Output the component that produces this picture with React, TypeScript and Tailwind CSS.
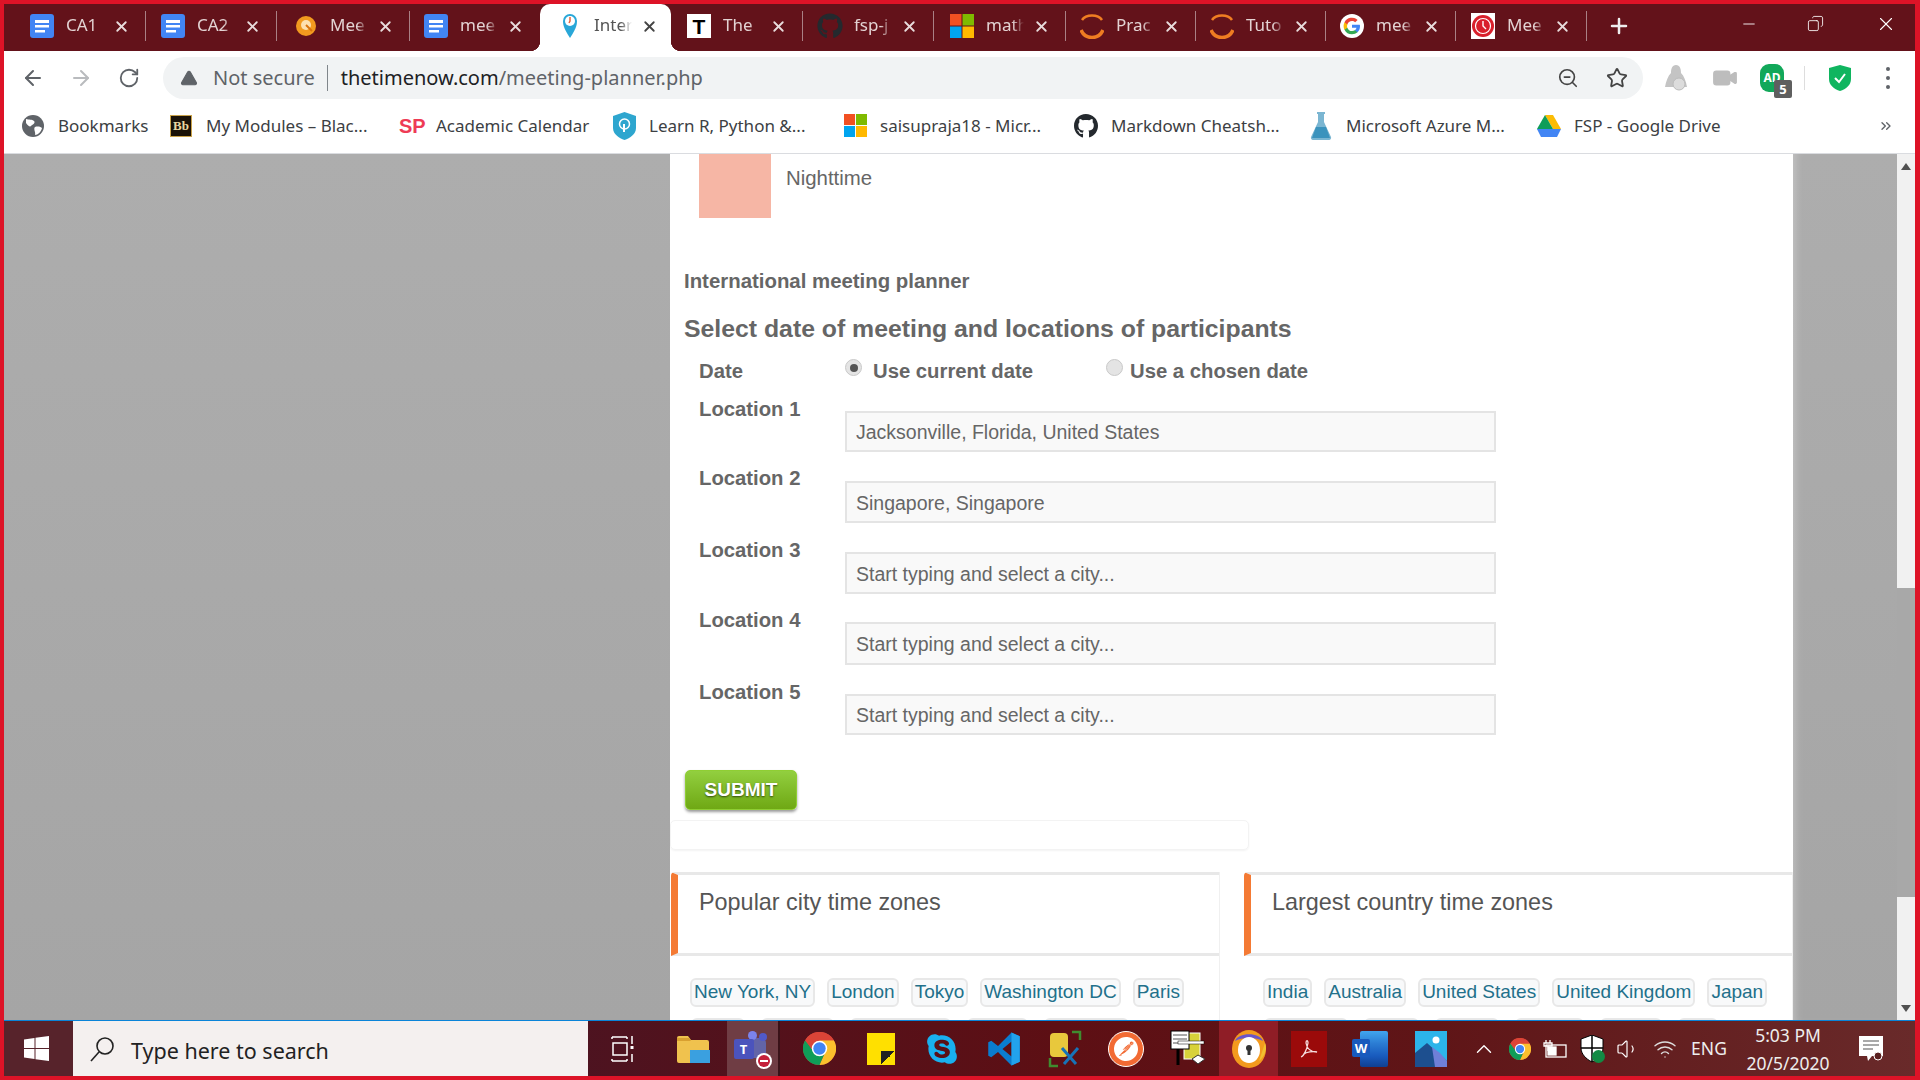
import React from "react";
import { ArrowLeft, ArrowRight, RotateCw, ZoomOut, Star, Video, Volume1, Wifi, ChevronUp, X, Plus, Minus, Copy, TriangleAlert, ChevronsRight } from "lucide-react";
import { FaGithub, FaSkype } from "react-icons/fa";
import { SiPostman } from "react-icons/si";

const Doc = () => (
  <svg width="24" height="24" viewBox="0 0 24 24"><rect x="0" width="24" height="24" rx="3" fill="#4285f4" /><rect x="5" y="6" width="14" height="3" fill="#fff" /><rect x="5" y="11" width="14" height="2.5" fill="#fff" /><rect x="5" y="16" width="10" height="2.5" fill="#fff" /></svg>
);
const Ball = () => (
  <svg width="24" height="24" viewBox="0 0 24 24"><circle cx="12" cy="12" r="10" fill="#f29a1f" /><circle cx="12" cy="11" r="5" fill="#fde0b0" /><path d="M12 11l6 6" stroke="#d9730d" strokeWidth="2" /></svg>
);
const Pin = () => (
  <svg width="24" height="26" viewBox="0 0 24 26"><path d="M12 25C7 17 5 13 5 8a7 7 0 0 1 14 0c0 5-2 9-7 17z" fill="#29a7d8" /><circle cx="12" cy="8" r="5" fill="#fff" /><path d="M12 4v4l-1 2" stroke="#e8633a" strokeWidth="1.5" fill="none" /></svg>
);
const TIcon = () => (
  <div className="w-[24px] h-[24px] bg-white flex items-center justify-center font-bold text-black text-[21px] leading-none font-['Liberation_Sans',sans-serif]">T</div>
);
const Ms = ({ s = 24 }: { s?: number }) => (
  <svg width={s} height={s} viewBox="0 0 24 24"><rect width="11.5" height="11.5" fill="#f25022" /><rect x="12.5" width="11.5" height="11.5" fill="#7fba00" /><rect y="12.5" width="11.5" height="11.5" fill="#00a4ef" /><rect x="12.5" y="12.5" width="11.5" height="11.5" fill="#ffb900" /></svg>
);
const Arcs = () => (
  <svg width="24" height="26" viewBox="0 0 24 26" fill="none"><path d="M2 7C6 1 18 1 22 7" stroke="#ef7d22" strokeWidth="2.5" /><path d="M1 17c4 10 18 10 22 0" stroke="#ef7d22" strokeWidth="3.5" /></svg>
);
const G = () => (
  <svg width="24" height="24" viewBox="0 0 24 24"><circle cx="12" cy="12" r="12" fill="#fff" /><path d="M20 12.3c0-.6-.1-1.1-.2-1.6H12v3.1h4.5a3.9 3.9 0 0 1-1.7 2.5v2h2.7c1.6-1.4 2.5-3.6 2.5-6z" fill="#4285f4" /><path d="M12 20.3c2.2 0 4.1-.7 5.5-2l-2.7-2c-.8.5-1.7.8-2.8.8-2.2 0-4-1.4-4.7-3.4H4.5v2.1A8.3 8.3 0 0 0 12 20.3z" fill="#34a853" /><path d="M7.3 13.7a5 5 0 0 1 0-3.3V8.3H4.5a8.3 8.3 0 0 0 0 7.5z" fill="#fbbc05" /><path d="M12 7c1.2 0 2.3.4 3.2 1.3l2.4-2.4A8.3 8.3 0 0 0 4.5 8.3l2.8 2.1C8 8.4 9.8 7 12 7z" fill="#ea4335" /></svg>
);
const RedClock = () => (
  <svg width="24" height="26" viewBox="0 0 24 26"><rect width="24" height="26" fill="#fff" /><circle cx="12" cy="13" r="11" fill="#d9202c" /><circle cx="12" cy="13" r="7.5" fill="none" stroke="#fff" strokeWidth="1.2" /><path d="M12 8v5l3 3" stroke="#fff" strokeWidth="1.4" fill="none" /></svg>
);
const Chrome = ({ s = 32 }: { s?: number }) => (
  <svg width={s} height={s} viewBox="0 0 32 32"><circle cx="16" cy="16" r="16" fill="#db4437" /><path d="M16 32a16 16 0 0 0 13.9-24H16l6 10.4z" fill="#fbc02d" /><path d="M2.1 8A16 16 0 0 0 16 32l6-13.6H10z" fill="#0f9d58" /><path d="M2.1 8a16 16 0 0 1 27.8 0H16a8 8 0 0 0-6 10.4z" fill="#db4437" /><circle cx="16" cy="16" r="7.5" fill="#fff" /><circle cx="16" cy="16" r="6" fill="#4285f4" /></svg>
);
const Drive = () => (
  <svg width="24" height="22" viewBox="0 0 24 22"><path d="M8 0h8l8 14h-8z" fill="#fbbc05" /><path d="M8 0l8 14-4 7-12-7z" fill="#0f9d58" /><path d="M0 14h24l-4 8H4z" fill="#4285f4" /></svg>
);
const Flask = () => (
  <svg width="22" height="30" viewBox="0 0 22 30"><path d="M7 1h8v2h-1v8l7 15c.5 1.5-.5 3-2 3H3c-1.5 0-2.5-1.5-2-3l7-15V3H7z" fill="#7bb6d2" /><path d="M6 16h10l4 11H2z" fill="#3b93bd" /></svg>
);
const Shield = () => (
  <svg width="23" height="28" viewBox="0 0 23 28"><path d="M11.5 0L23 4v12c0 6-6 10-11.5 12C6 26 0 22 0 16V4z" fill="#2ea6cf" /><circle cx="11.5" cy="12" r="5" fill="none" stroke="#fff" strokeWidth="1.5" /><path d="M11 12v8" stroke="#fff" strokeWidth="2" /></svg>
);
const Globe = () => (
  <svg width="22" height="22" viewBox="0 0 22 22"><circle cx="11" cy="11" r="11" fill="#5f6368" /><path d="M4 4c3 1 6 0 8 2s-2 4-3 5-3 0-5-3zM13 12c3-1 6 0 7 1-1 4-4 7-7 7 1-3-2-6 0-8z" fill="#fff" /></svg>
);

function Tab({ icon, title, active, sep = true, shift = "" }: { icon: React.ReactNode; title: string; active?: boolean; sep?: boolean; shift?: string }) {
  return (
    <div className={active ? `relative w-[131px] h-full bg-white rounded-t-[10px] flex items-center ${shift}` : `relative w-[131px] h-full flex items-center ${shift}`}>
      {active && <span className="absolute -left-[10px] bottom-0 w-[10px] h-[10px] bg-[radial-gradient(circle_at_0_0,#63121a_10px,#fff_10.5px)]" />}
      {active && <span className="absolute -right-[10px] bottom-0 w-[10px] h-[10px] bg-[radial-gradient(circle_at_100%_0,#63121a_10px,#fff_10.5px)]" />}
      <div className={active ? "ml-[17px] w-[26px] shrink-0 flex justify-center -mt-[3px]" : "ml-[14px] w-[26px] shrink-0 flex justify-center -mt-[3px]"}>{icon}</div>
      <div className={active ? "ml-[11px] w-[38px] overflow-hidden whitespace-nowrap text-[17px] text-[#555] -mt-[5px] [mask-image:linear-gradient(to_right,#000_70%,transparent)]" : "ml-[11px] w-[38px] overflow-hidden whitespace-nowrap text-[17px] text-[#e3d3d3] -mt-[5px] [mask-image:linear-gradient(to_right,#000_70%,transparent)]"}>{title}</div>
      <X size={17} strokeWidth={2.6} className={active ? "ml-[9px] text-[#444] -mt-[3px]" : "ml-[9px] text-[#e8dcdc] -mt-[3px]"} />
      {sep && !active && <span className="absolute right-0 top-[7px] h-[30px] w-px bg-[#a98085]" />}
    </div>
  );
}

const tabs: { i: React.ReactNode; t: string; a?: boolean; s?: boolean; m?: string }[] = [
  { i: <Doc />, t: "CA1" },
  { i: <Doc />, t: "CA2" },
  { i: <Ball />, t: "Mee", m: "ml-[2px]" },
  { i: <Doc />, t: "mee", s: false, m: "-ml-[1px]" },
  { i: <Pin />, t: "Inter", a: true },
  { i: <TIcon />, t: "The", m: "ml-[1px]" },
  { i: <FaGithub size={26} className="text-[#24292e]" />, t: "fsp-j" },
  { i: <Ms />, t: "math", m: "ml-[1px]" },
  { i: <Arcs />, t: "Prac", m: "-ml-[1px]" },
  { i: <Arcs />, t: "Tuto", m: "-ml-[1px]" },
  { i: <G />, t: "mee", m: "-ml-[1px]" },
  { i: <RedClock />, t: "Mee" },
];

const bookmarks: { i: React.ReactNode; t: string; w: string }[] = [
  { i: <Globe />, t: "Bookmarks", w: "w-[148px]" },
  { i: <div className="w-[22px] h-[22px] bg-[#1a1208] border border-[#c9a24a] text-[#e8d7a0] text-[13px] font-bold leading-[20px] text-center font-['Liberation_Serif',serif]">Bb</div>, t: "My Modules – Blac...", w: "w-[230px]" },
  { i: <div className="w-[24px] text-[#ee3b55] font-extrabold text-[20px] leading-none font-['Liberation_Sans',sans-serif]">SP</div>, t: "Academic Calendar", w: "w-[213px]" },
  { i: <Shield />, t: "Learn R, Python &...", w: "w-[231px]" },
  { i: <Ms s={23} />, t: "saisupraja18 - Micr...", w: "w-[231px]" },
  { i: <FaGithub size={26} className="text-[#24292e]" />, t: "Markdown Cheatsh...", w: "w-[235px]" },
  { i: <Flask />, t: "Microsoft Azure M...", w: "w-[228px]" },
  { i: <Drive />, t: "FSP - Google Drive", w: "w-[320px]" },
];

function Bookmark({ i, t, w }: { i: React.ReactNode; t: string; w: string }) {
  return (
    <div className={`${w} flex items-center shrink-0`}>
      <div className="w-[24px] shrink-0 flex justify-center">{i}</div>
      <span className="ml-[13px] whitespace-nowrap text-[17px] text-[#3c4043]">{t}</span>
    </div>
  );
}

const Radio = ({ on }: { on?: boolean }) => (
  <span className="w-[17px] h-[17px] rounded-full bg-[#e4e4e4] border border-[#c9c9c9] flex items-center justify-center shrink-0">
    {on && <span className="w-[8px] h-[8px] rounded-full bg-[#555]" />}
  </span>
);

const rows: { l: string; v?: string; h: string; m: string; ih: string }[] = [
  { l: "Location 1", v: "Jacksonville, Florida, United States", h: "h-[69px]", m: "mt-[14px]", ih: "h-[41px]" },
  { l: "Location 2", v: "Singapore, Singapore", h: "h-[72px]", m: "mt-[15px]", ih: "h-[42px]" },
  { l: "Location 3", h: "h-[70px]", m: "mt-[14px]", ih: "h-[42px]" },
  { l: "Location 4", h: "h-[72px]", m: "mt-[14px]", ih: "h-[43px]" },
  { l: "Location 5", h: "h-[90px]", m: "mt-[14px]", ih: "h-[41px]" },
];

const Tag = ({ t, w }: { t?: string; w?: string }) => (
  <span className={`h-[29px] px-[2px] flex items-center rounded-[6px] border-2 border-[#e8e8e8] bg-[#f8f9fa] text-[19px] text-[#22708a] whitespace-nowrap ${w ?? ""}`}>{t}</span>
);

function Card({ title, a, b }: { title: string; a: string[]; b: string[] }) {
  return (
    <div className="w-[549px] h-full border-r border-[#f0f0f0]">
      <div className="h-[84px] border-y-[3px] border-[#e8e8e8] border-l-[7px] border-l-[#f47a34] rounded-tl-[4px] pl-[21px] pt-[12px] text-[23.4px] leading-[30px] text-[#555]">{title}</div>
      <div className="pl-[19px] pt-[22px] flex gap-[12px]">{a.map((t) => <Tag key={t} t={t} />)}</div>
      <div className="pl-[20px] pt-[11px] flex gap-[16px]">{b.map((w) => <Tag key={w} w={w} />)}</div>
    </div>
  );
}

const Slot = ({ c, children }: { c: string; children: React.ReactNode }) => (
  <div className={`${c} h-full shrink-0 flex items-center justify-center`}>{children}</div>
);

export default function App() {
  return (
    <div className="w-[1920px] h-[1080px] overflow-hidden flex flex-col bg-[#dd1327] pt-[4px] pl-[4px] pr-[5px] pb-[4px] font-['Noto_Sans',sans-serif]">
      {/* tab strip */}
      <div className="h-[47px] shrink-0 bg-[#63121a] flex items-center pl-[11px]">
        <div className="flex h-full">
          {tabs.map((t, k) => <Tab key={k} icon={t.i} title={t.t} active={t.a} sep={t.s !== false} shift={t.m} />)}
        </div>
        <Plus size={24} strokeWidth={2.5} className="ml-[20px] -mt-[4px] text-[#eee]" />
        <div className="ml-auto flex items-center -mt-[8px] text-white">
          <Minus size={18} strokeWidth={1.2} />
          <Copy size={17} strokeWidth={1.2} className="ml-[49px] -scale-x-100" />
          <X size={22} strokeWidth={1.2} className="ml-[51px] mr-[18px]" />
        </div>
      </div>
      {/* toolbar */}
      <div className="h-[54px] shrink-0 bg-white flex items-center">
        <ArrowLeft size={24} strokeWidth={2} className="ml-[17px] text-[#5f6368]" />
        <ArrowRight size={24} strokeWidth={2} className="ml-[24px] text-[#b9bbbe]" />
        <RotateCw size={22} strokeWidth={2} className="ml-[25px] text-[#5f6368]" />
        <div className="ml-[23px] w-[1480px] h-[42px] rounded-full bg-[#f1f3f4] flex items-center">
          <TriangleAlert size={18} fill="#5f6368" strokeWidth={1.5} className="ml-[17px] text-[#5f6368]" />
          <span className="ml-[15px] text-[20px] text-[#5f6368]">Not secure</span>
          <span className="ml-[12px] w-px h-[26px] bg-[#80868b]" />
          <span className="ml-[13px] text-[20px] text-[#5f6368] whitespace-nowrap"><span className="text-[#202124]">thetimenow.com</span>/meeting-planner.php</span>
          <ZoomOut size={22} strokeWidth={1.8} className="ml-auto text-[#444]" />
          <Star size={22} strokeWidth={2} className="ml-[27px] mr-[15px] text-[#444]" />
        </div>
        <svg width="26" height="30" viewBox="0 0 26 30" className="ml-[20px]"><path d="M13 2c4 0 5 4 5 8 3 3 5 8 6 14H2c1-6 3-11 6-14 0-4 1-8 5-8z" fill="#c4c4c4" /><circle cx="16" cy="21" r="6" fill="#dcdcdc" stroke="#bbb" /></svg>
        <Video size={26} fill="#bdbdbd" className="ml-[23px] text-[#bdbdbd]" />
        <div className="relative ml-[22px] w-[24px] h-[28px]">
          <span className="absolute inset-0 rounded-[9px] bg-[#12a85a] text-white text-[12px] font-bold leading-[28px] text-center">AD</span>
          <span className="absolute left-[14px] top-[16px] w-[18px] h-[18px] rounded-[2px] bg-[#5f5f5f] text-white text-[13px] font-bold leading-[18px] text-center">5</span>
        </div>
        <span className="ml-[20px] w-px h-[24px] bg-[#ddd]" />
        <svg width="22" height="26" viewBox="0 0 22 26" className="ml-[24px]"><path d="M11 0l11 3v11c0 6-5 10-11 12C5 24 0 20 0 14V3z" fill="#0fb55f" /><path d="M6 13l4 4 6-8" fill="none" stroke="#fff" strokeWidth="2" /></svg>
        <div className="ml-[35px] flex flex-col gap-[5px]">
          <span className="w-[4px] h-[4px] rounded-full bg-[#5f6368]" />
          <span className="w-[4px] h-[4px] rounded-full bg-[#5f6368]" />
          <span className="w-[4px] h-[4px] rounded-full bg-[#5f6368]" />
        </div>
      </div>
      {/* bookmarks */}
      <div className="h-[49px] shrink-0 bg-white border-b border-[#dadce0] flex items-center pl-[17px] pb-[7px]">
        {bookmarks.map((b) => <Bookmark key={b.t} {...b} />)}
        <ChevronsRight size={16} className="ml-auto mr-[21px] text-[#5f6368]" />
      </div>
      {/* content */}
      <div className="h-[866px] shrink-0 flex">
        <div className="w-[666px] bg-[linear-gradient(#adadad,#a5a5a5)]" />
        <div className="w-[1123px] bg-white overflow-hidden font-['Liberation_Sans',sans-serif] text-[#666]">
          <div className="h-[64px] ml-[29px] flex">
            <div className="w-[72px] bg-[#f6b6a5]" />
            <span className="ml-[15px] mt-[12px] text-[20.4px] leading-[24px]">Nighttime</span>
          </div>
          <div className="ml-[14px] mt-[51px] font-bold text-[20.4px] leading-[24px]">International meeting planner</div>
          <div className="ml-[14px] mt-[21px] font-bold text-[24.8px] leading-[30px]">Select date of meeting and locations of participants</div>
          <div className="ml-[29px] mt-[15px] h-[38px] flex items-start font-bold text-[20.3px] leading-[24px]">
            <span className="w-[146px]">Date</span>
            <Radio on />
            <span className="ml-[11px] w-[233px]">Use current date</span>
            <Radio />
            <span className="ml-[7px]">Use a chosen date</span>
          </div>
          {rows.map((r) => (
            <div key={r.l} className={`${r.h} ml-[29px] flex items-start`}>
              <span className="w-[146px] font-bold text-[20.3px] leading-[24px]">{r.l}</span>
              <input readOnly value={r.v} placeholder="Start typing and select a city..." className={`${r.m} ${r.ih} w-[651px] bg-[#f9f9f9] border-2 border-[#e4e4e4] pl-[9px] pt-[2px] text-[19.5px] text-[#666] placeholder:text-[#666] outline-none`} />
            </div>
          ))}
          <div className="ml-[15px] w-[112px] h-[40px] rounded-[5px] border border-[#8fce34] bg-[linear-gradient(#92cf3f,#6fa814)] shadow-[0_2px_3px_rgba(0,0,0,0.4)] flex items-center justify-center text-white font-bold text-[19px] [text-shadow:0_1px_2px_rgba(0,0,0,0.6)]">SUBMIT</div>
          <div className="mt-[10px] w-[579px] h-[30px] rounded-[5px] border border-[#f3f3f3] shadow-[0_1px_2px_rgba(0,0,0,0.05)]" />
          <div className="mt-[22px] ml-[1px] h-[148px] flex gap-[24px]">
            <Card title="Popular city time zones" a={["New York, NY", "London", "Tokyo", "Washington DC", "Paris"]} b={["w-[54px]", "w-[73px]", "w-[101px]", "w-[61px]", "w-[85px]"]} />
            <Card title="Largest country time zones" a={["India", "Australia", "United States", "United Kingdom", "Japan"]} b={["w-[84px]", "w-[55px]", "w-[64px]", "w-[69px]", "w-[62px]", "w-[40px]"]} />
          </div>
        </div>
        <div className="w-[104px] bg-[linear-gradient(#adadad,#a5a5a5)] shadow-[inset_8px_0_8px_-6px_rgba(255,255,255,0.3)]" />
        <div className="w-[18px] bg-[#f1f1f1] flex flex-col items-center">
          <div className="h-[24px] flex items-center justify-center">
            <span className="w-0 h-0 border-x-[5px] border-x-transparent border-b-[7px] border-b-[#505050]" />
          </div>
          <div className="mt-[410px] w-full h-[309px] bg-[#a8a8a8]" />
          <div className="mt-auto h-[24px] flex items-center justify-center">
            <span className="w-0 h-0 border-x-[5px] border-x-transparent border-t-[7px] border-t-[#505050]" />
          </div>
        </div>
      </div>
      {/* taskbar */}
      <div className="h-[56px] shrink-0 border-t border-[#0a84d8] bg-[linear-gradient(to_right,#4f1a24,#4d1320_30%,#5d0f14_55%,#5f1517_75%,#692a2a)] flex items-center text-white">
        <div className="w-[69px] h-full bg-[#57232b] flex items-center justify-center pr-[5px]">
          <svg width="25" height="25" viewBox="0 0 25 25" fill="#fff"><path d="M0 3.5L10.5 2v10H0zM11.500 1.800L25 0v12H11.500zM0 13h10.500v10L0 21.500zM11.500 13H25v12l-13.500-1.800z" /></svg>
        </div>
        <div className="w-[515px] h-full bg-[#f4f0ef] flex items-center text-[#222]">
          <svg width="26" height="26" viewBox="0 0 26 26" fill="none" stroke="#222" strokeWidth="1.6" className="ml-[16px]"><circle cx="16" cy="10" r="8" /><path d="M10 16L2 25" /></svg>
          <span className="ml-[16px] mt-[6px] text-[21.5px] whitespace-nowrap">Type here to search</span>
        </div>
        <Slot c="w-[70px]">
          <svg width="24" height="30" viewBox="0 0 24 30" fill="none" stroke="#fff" strokeWidth="1.5"><path d="M1 3h15M2 9h14v12H2zM1 27h15M1 27v-2M16 27v-2M1 3v2M16 3v2" /><path d="M21 2v8M21 20v8" /><rect x="19.500" y="12" width="3" height="3" fill="#fff" stroke="none" /></svg>
        </Slot>
        <Slot c="w-[69px]">
          <svg width="34" height="28" viewBox="0 0 34 28"><path d="M1 3a2 2 0 0 1 2-2h9l3 4h16a2 2 0 0 1 2 2v19a2 2 0 0 1-2 2H3a2 2 0 0 1-2-2z" fill="#f0c24e" /><path d="M14 15h20v13H14z" fill="#3aa0e0" /><path d="M1 3h12l2 3H1z" fill="#d9a030" /></svg>
        </Slot>
        <Slot c="w-[53px] bg-[#6f3d44] border-r-[2px] border-[#3a1218]">
          <div className="relative w-[38px] h-[36px]">
            <span className="absolute left-[0px] top-[8px] w-[20px] h-[20px] rounded-[2px] bg-[#4b53bc] text-[13px] font-bold text-white leading-[20px] text-center z-10">T</span>
            <span className="absolute left-[14px] top-[7px] w-[18px] h-[20px] rounded-[5px] bg-[#6264a7]" />
            <span className="absolute left-[14px] top-[0px] w-[9px] h-[9px] rounded-full bg-[#7b83eb]" />
            <span className="absolute left-[25px] top-[2px] w-[8px] h-[8px] rounded-full bg-[#5059c9]" />
            <span className="absolute left-[22px] top-[22px] w-[16px] h-[16px] rounded-full bg-white z-20 flex items-center justify-center"><span className="w-[12px] h-[12px] rounded-full bg-[#c4203a] flex items-center justify-center"><span className="w-[8px] h-[2px] bg-white" /></span></span>
          </div>
        </Slot>
        <Slot c="w-[78px]"><Chrome s={33} /></Slot>
        <Slot c="w-[46px]">
          <div className="w-[28px] h-[32px] bg-[#ffe000] relative">
            <span className="absolute right-0 bottom-0 w-[14px] h-[14px] bg-[linear-gradient(135deg,#222_50%,#ffe000_50%)]" />
          </div>
        </Slot>
        <Slot c="w-[76px]"><FaSkype size={34} className="text-[#19b0ee]" /></Slot>
        <Slot c="w-[48px]">
          <svg width="36" height="36" viewBox="0 0 24 24"><path d="M17 1L8 10 3.5 6.5 1.5 7.5v9l2 1L8 14l9 9 5.5-2.5V3.5zM17 7v10l-6-5z" fill="#0a7ccf" /><path d="M17 1l5.5 2.5v17L17 23V1z" fill="#22a3ec" /></svg>
        </Slot>
        <Slot c="w-[76px]">
          <svg width="36" height="38" viewBox="0 0 36 38"><rect x="2" y="3" width="18" height="24" rx="4" fill="#e8c83c" /><path d="M24 2h8v8M2 28v8h8" fill="none" stroke="#3f8c2f" strokeWidth="2.5" /><path d="M14 18l14 16M30 18L16 34" stroke="#1773b8" strokeWidth="3" /></svg>
        </Slot>
        <Slot c="w-[44px]">
          <div className="w-[36px] h-[36px] shrink-0 rounded-full bg-[#f26a33] border border-white flex items-center justify-center">
            <SiPostman size={24} className="text-white" />
          </div>
        </Slot>
        <Slot c="w-[71px] pl-[9px]">
          <svg width="36" height="40" viewBox="0 0 36 40"><rect x="14" y="4" width="16" height="26" fill="#d8d23a" stroke="#fff" /><rect x="1" y="2" width="18" height="18" fill="#fff" stroke="#000" /><path d="M3 6h14M3 10h14M3 14h14" stroke="#555" /><path d="M8 20v16" stroke="#000" strokeWidth="3" /><rect x="8" y="12" width="26" height="3" fill="#fff" stroke="#000" strokeWidth="0.5" /><path d="M22 30l6-4 7 4-7 5z" fill="#fff" stroke="#333" /></svg>
        </Slot>
        <Slot c="w-[59px] bg-[#8f1d26]">
          <svg width="34" height="40" viewBox="0 0 34 40"><ellipse cx="17" cy="20" rx="17" ry="19" fill="#f39a1e" /><path d="M3 12C6 3 28 3 31 12c-6-4-22-4-28 0z" fill="#6b55c9" /><path d="M27 32a17 19 0 0 0 7-12c0-2 0-4-1-6z" fill="#f0c030" /><ellipse cx="17" cy="21" rx="11" ry="13" fill="#fff" /><circle cx="17" cy="19" r="3" fill="#333" /><rect x="15.5" y="19" width="3" height="7" fill="#333" /></svg>
        </Slot>
        <div className="ml-[13px] w-[36px] h-[36px] shrink-0 bg-[#9b0a0a] flex items-center justify-center"><svg width="20" height="20" viewBox="0 0 20 20" fill="none" stroke="#f5dcdc" strokeWidth="1.3"><path d="M2 18c3-1 6-8 7-14 0-3-2-3-2 0 1 6 5 9 11 9-4-1-11 0-13 2" /></svg></div>
        <Slot c="w-[86px]">
          <div className="relative w-[36px] h-[36px]">
            <div className="absolute right-0 top-0 w-[28px] h-[36px] rounded-[2px] bg-[linear-gradient(#41a5ee,#2b7cd3_35%,#185abd_70%,#103f91)]" />
            <div className="absolute left-0 top-[8px] w-[18px] h-[18px] rounded-[2px] bg-[#185abd] text-white text-[13px] font-bold leading-[18px] text-center">W</div>
          </div>
        </Slot>
        <Slot c="w-[36px]">
          <svg width="32" height="36" viewBox="0 0 32 36"><rect width="32" height="36" fill="#2cb4ea" /><circle cx="21" cy="9" r="3.5" fill="#fff" /><path d="M0 36V22l12-10 20 18v6z" fill="#1d4f8f" /><path d="M17 16l8 6 7 8v6H20z" fill="#6f7fd8" /></svg>
        </Slot>
        <Slot c="w-[60px] pl-[10px]"><ChevronUp size={26} strokeWidth={1.3} /></Slot>
        <Slot c="w-[22px]"><Chrome s={22} /></Slot>
        <Slot c="w-[48px]">
          <svg width="24" height="20" viewBox="0 0 24 20" fill="none" stroke="#fff" strokeWidth="1.3"><rect x="3" y="6" width="20" height="12" /><rect x="5" y="8" width="8" height="8" fill="#fff" /><path d="M3 1v3M7 1v3M1 4h8v3H1zM5 7v5" /></svg>
        </Slot>
        <Slot c="w-[26px]">
          <div className="relative w-[24px] h-[28px]">
            <svg width="24" height="28" viewBox="0 0 24 28"><path d="M12 0l11 4v9c0 6-5 11-11 14C6 24 1 19 1 13V4z" fill="#fff" stroke="#000" /><path d="M12 0v27M1 13h22" stroke="#000" strokeWidth="1.5" /></svg>
            <span className="absolute left-[12px] top-[15px] w-[13px] h-[13px] rounded-full bg-[#128a44]" />
          </div>
        </Slot>
        <Slot c="w-[46px]"><Volume1 size={24} strokeWidth={1.2} /></Slot>
        <Slot c="w-[28px]"><Wifi size={24} strokeWidth={1.4} className="text-[#ddd]" /></Slot>
        <Slot c="w-[60px]"><span className="text-[17.5px] text-[#eee]">ENG</span></Slot>
        <Slot c="w-[98px]">
          <div className="flex flex-col items-center text-[17.5px] leading-[28px] text-[#eee]">
            <span>5:03 PM</span>
            <span>20/5/2020</span>
          </div>
        </Slot>
        <Slot c="w-[68px]">
          <svg width="26" height="28" viewBox="0 0 26 28"><path d="M1 1h24v20H14l-4 5-1-5H1z" fill="#fff" /><path d="M5 6h16M5 10h16M5 14h10" stroke="#555" strokeWidth="1.2" /><circle cx="20" cy="21" r="4" fill="#5a2020" stroke="#fff" /></svg>
        </Slot>
      </div>
    </div>
  );
}
